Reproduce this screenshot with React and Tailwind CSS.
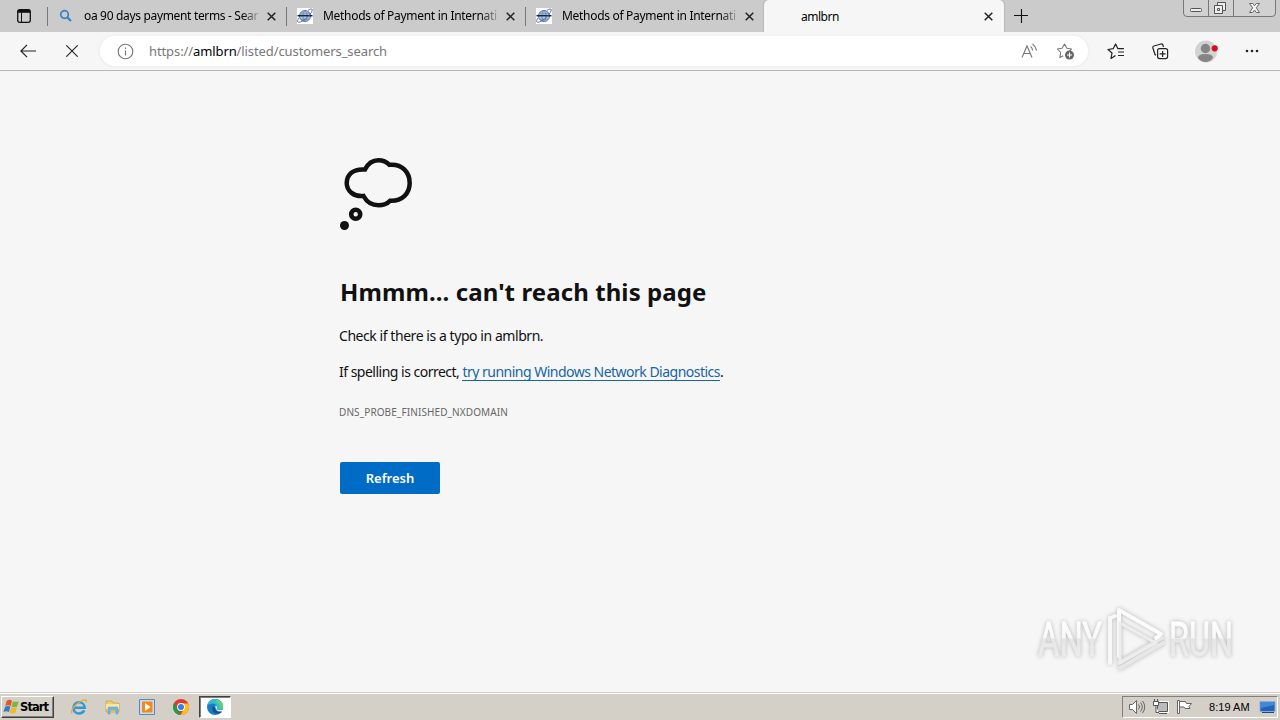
import React from 'react';
import clsx from 'clsx';

const tabs = [
  { id: 1, title: 'oa 90 days payment terms - Sear', icon: 'search' },
  { id: 2, title: 'Methods of Payment in Internati', icon: 'globe' },
  { id: 3, title: 'Methods of Payment in Internati', icon: 'globe' },
];

const CloseIcon = () => (
  <svg className="block shrink-0" width="9" height="9" viewBox="0 0 9 9" stroke="#222" strokeWidth="1.5" fill="none">
    <path d="M.7.7l7.6 7.6M8.3.7L.7 8.3" />
  </svg>
);

const SearchIcon = () => (
  <svg className="shrink-0" width="16" height="16" viewBox="0 0 16 16" fill="none" stroke="#3a82c8">
    <circle cx="6.500" cy="6.500" r="3.800" strokeWidth="1.700" />
    <path d="M9.200 9.300l3.700 3.700" strokeWidth="2.200" />
  </svg>
);

const GlobeIcon = () => (
  <svg className="shrink-0" width="16" height="16" viewBox="0 0 16 16" fill="none">
    <path fill="#fff" d="M0 0h16v16H0z" />
    <circle cx="8" cy="8" r="5.500" fill="#b4c7e3" stroke="#5574aa" />
    <path d="M3.500 5.200h9M3.800 11.200h8.400M8 2.400c-2.800 3-2.800 8 0 11M8 2.400c2.800 3 2.800 8 0 11" stroke="#5574aa" strokeWidth=".6" />
    <path d="M.5 7.700h15" stroke="#14233f" strokeWidth="1.500" />
    <path d="M2 10C-1 14 1 15.500 5 13.200 10 10.500 15 5 15.300 1.800 15 .4 13 1 11 2.300" stroke="#4a639a" strokeWidth=".9" />
  </svg>
);

const Tab = ({ title, icon }) => (
  <div className="flex h-8 w-[239px] items-center pr-[10px] pl-[11px]">
    {icon === 'search' ? <SearchIcon /> : <GlobeIcon />}
    <span
      className={clsx(
        'ml-[10px] w-[175px] shrink-0 whitespace-nowrap [mask-image:linear-gradient(to_right,#000_158px,transparent_178px)]',
        icon === 'search' ? 'tracking-[-0.33px]' : 'tracking-[-0.3px]',
      )}
    >
      {title}
    </span>
    <span className="ml-[8px]"><CloseIcon /></span>
  </div>
);

const WindowButtons = () => (
  <svg className="block" width="94" height="18" viewBox="0 0 94 18" fill="none">
    <path d="M.5 0v13q0 3.500 3.500 3.500h85q3.500 0 3.500-3.500V0" fill="#d1d1d1" stroke="#777" />
    <path d="M25.500 0v16M50.500 0v16" stroke="#777" />
    <rect x="7.500" y="8.500" width="11" height="3" rx="1" fill="#eee" stroke="#555" />
    <g fill="#eee" stroke="#555">
      <path d="M34.500 2.500h8v8h-8z" />
      <path d="M31.500 5.500h8v8h-8z" />
      <path d="M34.500 8.500h2v2h-2z" />
    </g>
    <path d="M66.500 3.500h3.200l1.800 2.200 1.800-2.200h3.200l-3.200 4.300 3.200 4.700h-3.200l-1.800-2.500-1.800 2.500h-3.200l3.200-4.700z" fill="#f3f3f3" stroke="#666" />
  </svg>
);

const TabStrip = () => (
  <div className="relative flex h-8 bg-[#cbcbcb] text-xs text-black">
    <div className="flex w-[47px] items-center pl-[17px]">
      <svg width="14" height="14" viewBox="0 0 14 14" fill="none" stroke="#111">
        <rect x=".7" y=".7" width="12.600" height="12.600" rx="2" strokeWidth="1.300" />
        <path d="M1 2.300h12" strokeWidth="3" />
        <path d="M4.500 3v10" />
      </svg>
    </div>
    {tabs.map((tab) => (
      <div key={tab.id} className="flex items-center">
        <i className="-mr-px h-[19px] w-px bg-[#777]" />
        <Tab title={tab.title} icon={tab.icon} />
      </div>
    ))}
    <div className="flex h-8 w-[240px] items-center justify-between rounded-t-[5px] bg-[#f6f6f6] pr-[11px] pl-[37px] shadow-[0_0_1px_1px_#b8b8b8]">
      <span className="pt-px tracking-[-0.5px]">amlbrn</span>
      <CloseIcon />
    </div>
    <svg className="mt-[9px] ml-[10px]" width="14" height="14" viewBox="0 0 14 14" stroke="#111">
      <path d="M0 6.500h14M7.500 0v14" strokeWidth="1.100" />
    </svg>
    <div className="ml-auto w-[97px]">
      <WindowButtons />
    </div>
  </div>
);

const Toolbar = () => (
  <div className="relative flex h-[39px] items-center border-b border-[#b7b7b7] bg-[#f6f6f6]">
    <svg className="ml-[20px]" width="17" height="14" viewBox="0 0 17 14" fill="none" stroke="#222" strokeWidth="1.200">
      <path d="M16 7H1M7 .8L.9 7 7 13.200" />
    </svg>
    <svg className="ml-[29px]" width="12" height="12" viewBox="0 0 12 12" stroke="#222" strokeWidth="1.100">
      <path d="M.3.3l11.400 11.400M11.700.3L.3 11.700" />
    </svg>
    <div className="ml-[22px] flex h-[30px] w-[988px] items-center rounded-full bg-white pr-[13px] pl-[17px] shadow-[0_0_0_2px_#f1f1f1]">
      <svg width="17" height="17" viewBox="0 0 17 17" fill="none" stroke="#777">
        <circle cx="8.500" cy="8.500" r="7.300" strokeWidth="1.100" />
        <path d="M8.500 7.500v5M8.500 4.500V6" strokeWidth="1.200" />
      </svg>
      <span className="mt-px ml-[15px] text-[13px] tracking-[-0.1px] text-[#777]">
        https://<span className="text-black">amlbrn</span>/listed/customers_search
      </span>
      <svg className="ml-auto" width="17" height="16" viewBox="0 0 17 16" fill="none" stroke="#777" strokeWidth="1.100">
        <path d="M2 14.500L7 3l5 11.500M3.800 10.500h6.500" />
        <path d="M10.500 3.500q2 1.500 2.200 4M12.500 1q3.500 2.500 4 6.500" />
      </svg>
      <svg className="ml-[19px]" width="19" height="18" viewBox="0 0 19 18" fill="none" stroke="#777" strokeWidth="1.100">
        <path d="M6.500 13.200l-3.400 1.900.9-5.100L.8 6.500l4.600-.7L7.800 1.500l2.300 4.300 4.700.7-2 1.800" transform="translate(.7 .5)" strokeLinejoin="round" />
        <circle cx="13.500" cy="13" r="4.500" fill="#666" stroke="none" />
        <path d="M11 13h5M13.500 10.500v5" stroke="#fff" />
      </svg>
    </div>
    <svg className="ml-[19px]" width="18" height="17" viewBox="0 0 18 17" fill="none" stroke="#222" strokeWidth="1.200">
      <path d="M8.500 12.500l-4.500 3 1-5.500L1 6.500l5.200-.8L8.600 1l2.300 4.700h6M11 9h6M11 12.500h6" strokeLinejoin="round" />
    </svg>
    <svg className="ml-[27px]" width="17" height="17" viewBox="0 0 17 17" fill="none" stroke="#222" strokeWidth="1.200">
      <path d="M4 12.200l-1-.7L.9 5q-.4-1.500 1-2L9 1q1.300-.3 1.800.8l.7 2.200" />
      <rect x="5.600" y="5.600" width="10" height="10" rx="2" fill="#f6f6f6" />
      <path d="M10.600 8v6M7.600 10.800h6" />
    </svg>
    <svg className="ml-[26px]" width="23" height="23" viewBox="0 0 23 23">
      <circle cx="11" cy="11.500" r="11" fill="#d2d2d2" />
      <circle cx="10.500" cy="8.500" r="4.700" fill="#858585" />
      <path d="M3 18q0-4 7.500-4t7.500 4q-3 4-7.500 4T3 18z" fill="#858585" />
      <circle cx="19.700" cy="8.300" r="3.100" fill="#d70c22" />
    </svg>
    <svg className="ml-[27px]" width="14" height="4" viewBox="0 0 14 4" fill="#222">
      <circle cx="2" cy="2" r="1.300" />
      <circle cx="7" cy="2" r="1.300" />
      <circle cx="12" cy="2" r="1.300" />
    </svg>
  </div>
);

const ThoughtBubble = () => (
  <svg className="block" width="74" height="74" viewBox="0 0 74 74" fill="none" stroke="#111" strokeWidth="4.500">
    <path d="M25 11.500C28 5.500 33 2.300 38.500 2.300c5 0 8.500 2 11 4.500C62 5.500 69.700 14.500 69.700 25S62 43.500 50 42.800c-3 3-7 4.500-11.500 4.500C32 47.300 26.500 43.500 23.500 38 14 39 6.700 33 6.700 25 6.700 16.500 13 10.500 25 11.500z" />
    <circle cx="15.700" cy="56.200" r="4.500" strokeWidth="4.600" />
    <circle cx="4.500" cy="67.500" r="4.500" fill="#111" stroke="none" />
  </svg>
);

const Watermark = () => (
  <svg className="absolute right-[35px] bottom-[12px] overflow-visible" width="216" height="80" viewBox="0 0 216 80">
    <defs>
      <linearGradient id="letters" gradientUnits="userSpaceOnUse" x1="0" y1="18" x2="0" y2="56">
        <stop offset="0" stopColor="#fff" />
        <stop offset=".52" stopColor="#f8f8f8" />
        <stop offset=".56" stopColor="#e6e6e6" />
        <stop offset="1" stopColor="#ececec" />
      </linearGradient>
    </defs>
    <g className="[filter:drop-shadow(0_0_2px_#b4b4b4)]">
      <g fill="url(#letters)" stroke="url(#letters)" strokeWidth=".8" fontFamily="Roboto, sans-serif" fontSize="48">
        <text x="9" y="56" textLength="64" lengthAdjust="spacingAndGlyphs">ANY</text>
        <text x="140" y="56" textLength="64" lengthAdjust="spacingAndGlyphs">RUN</text>
      </g>
      <g fill="none" strokeLinejoin="round" strokeLinecap="round">
        <path d="M90 63l43-25M91 68l43-25" stroke="#e7e7e7" strokeWidth="4" />
        <path d="M90 56V10l42 24-5 4" stroke="#fbfbfb" strokeWidth="4" />
        <path d="M81 63V18l5-2" stroke="#f8f8f8" strokeWidth="4" />
        <path d="M91 23l36 20-36 20z" stroke="#ededed" strokeWidth="3" />
      </g>
    </g>
  </svg>
);

const ErrorPage = () => (
  <main className="relative h-[621px] bg-[#f6f6f6] pt-[87px] pl-[340px] text-[#111]">
    <ThoughtBubble />
    <h1 className="mt-[42px] text-2xl leading-9 font-bold tracking-[0.09px]">Hmmm... can't reach this page</h1>
    <p className="mt-4 -ml-px text-sm leading-5 tracking-[-0.44px]">Check if there is a typo in amlbrn.</p>
    <p className="mt-4 -ml-px text-sm leading-5 tracking-[-0.51px]">
      If spelling is correct, <a className="inline-block h-[19px] border-b border-[#1765a2] text-[#1765a2]">try running Windows Network Diagnostics</a>.
    </p>
    <p className="mt-[22px] -ml-px text-[10px] leading-4 tracking-[0.1px] text-[#666]">DNS_PROBE_FINISHED_NXDOMAIN</p>
    <button className="mt-[42px] block h-8 w-[100px] rounded-[2px] bg-[#006cc5] pt-px text-[13px] font-semibold text-white">Refresh</button>
    <Watermark />
  </main>
);

const ExplorerIcon = () => (
  <svg width="16" height="16" viewBox="0 0 16 16" fill="none">
    <path d="M13.300 11.500q-2 3-5.300 3A5.600 5.600 0 1 1 13.700 8.700H4" stroke="#3398d8" strokeWidth="2.600" />
    <path d="M1.200 14.500C-1 12 4 4 13 1q3-.7 2 2.500" stroke="#d9ad31" strokeWidth="1.200" />
  </svg>
);

const FolderIcon = () => (
  <svg width="16" height="16" viewBox="0 0 16 16">
    <path d="M1 2h6l1 2h6v9H1z" fill="#edcf6c" stroke="#bd963b" strokeWidth=".6" />
    <path d="M1 5h13v5H1z" fill="#fae79f" />
    <path d="M3 15V9q0-1 1-1h8q1 0 1 1v6h-2v-4H5v4z" fill="#75b7df" stroke="#5998be" strokeWidth=".5" />
  </svg>
);

const MediaIcon = () => (
  <svg width="16" height="16" viewBox="0 0 16 16">
    <path d="M.5.5h15v15H.5z" fill="#c7ddf4" stroke="#5689bf" />
    <path d="M3 2.500h10.500v11H3z" fill="#f48a16" />
    <path d="M6 4l5.500 4L6 12z" fill="#fff" />
  </svg>
);

const ChromeIcon = () => (
  <svg width="16" height="16" viewBox="0 0 16 16">
    <circle cx="8" cy="8" r="8" fill="#e4392e" />
    <path d="M1.100 4L5 10.500 8 16A8 8 0 0 1 1.100 4z" fill="#229b4b" />
    <path d="M8 4.500h7.200A8 8 0 0 1 7.500 16L11 10z" fill="#fbc116" />
    <circle cx="8" cy="8" r="3.900" fill="#fff" />
    <circle cx="8" cy="8" r="3" fill="#347fe3" />
  </svg>
);

const EdgeIcon = () => (
  <svg width="16" height="16" viewBox="0 0 16 16">
    <circle cx="8" cy="8" r="8" fill="#167cc3" />
    <path d="M.3 7A8 8 0 0 1 8 0c5 0 8 3.500 8 7 0 3-2.500 4-5 4-1.500 0-2-.7-1.500-1.500C11 7 8.500 4.500 5.500 4.500 3 4.500 1 5.500.3 7z" fill="#35bfc4" />
    <path d="M10 1q6 1.500 6 6 0 3-3 3.800Q14 5 9 3z" fill="#62cf7b" />
    <path d="M6 7c-2 4 1 8 6 7.500 1.500-.2 2.500-1 3-2-2 .8-7 .5-7-3.500z" fill="#164e8c" />
    <path d="M8.500 6.500Q11 8 9.500 9.500q0 1.500 2 1.500h4l-.5 1c-4 1-7-1-6.500-5.500z" fill="#fff" />
  </svg>
);

const StartButton = () => (
  <div className="flex h-[22px] w-[53px] items-center border border-t-white border-r-[#404040] border-b-[#404040] border-l-white bg-[#d4d0c8] shadow-[inset_-1px_-1px_0_#808080]">
    <svg className="ml-px shrink-0" width="17" height="16" viewBox="0 0 16 15">
      <path d="M3.500 1.500q2.500-1.500 5 0L7.200 6.500q-2.500-1.300-5 0z" fill="#e85522" />
      <path d="M9.300 2q2.700 1.300 5.500 0l-1.500 5q-2.700 1.400-5.200 0z" fill="#79b83b" />
      <path d="M2 7.300q2.500-1.400 5 0l-1.400 5q-2.500-1.400-5.200 0z" fill="#347bc6" />
      <path d="M7.900 7.800q2.500 1.400 5.200 0L11.600 13q-2.600 1.200-5.200 0z" fill="#f1b820" />
    </svg>
    <span className="pt-[2px] font-['DejaVu_Sans',sans-serif] text-[11.5px] font-bold tracking-[-0.9px]">Start</span>
  </div>
);

const Tray = () => (
  <div className="ml-auto flex h-[22px] w-[156px] items-center border border-t-[#808080] border-r-white border-b-white border-l-[#808080] pl-[6px]">
    <svg width="17" height="16" viewBox="0 0 17 16" fill="none" stroke="#666">
      <path d="M.5 5.500h3l4-4v13l-4-4h-3z" fill="#fff" />
      <path d="M9.500 5.500q2 2.500 0 5M11.500 3.500q3.500 4.500 0 9M13.500 2q4.500 6 0 12" />
    </svg>
    <svg className="ml-[7px]" width="17" height="16" viewBox="0 0 17 16" fill="none" stroke="#555">
      <path d="M4.500 3.500h10v9h-10z" fill="#bbb" stroke="#fff" strokeWidth="3" />
      <path d="M4.500 3.500h10v9h-10zM6 14.500h8" fill="#bbb" />
      <path d="M.5 2.500h5v4h-5zM1.500 0v2M4.500 0v2M3 7v6.500h3" fill="#fff" />
    </svg>
    <svg className="ml-[7px]" width="17" height="16" viewBox="0 0 17 16" fill="#fff" stroke="#666">
      <path d="M.5 1.500h2v13h-2z" />
      <path d="M2.500 2.500h6l1 2h5l-2.500 3 1 2h-5l-1-1.500H2.500z" />
    </svg>
    <span className="ml-[15px] pt-px font-['Liberation_Sans',sans-serif] text-[11px] tracking-[0.03px] whitespace-nowrap">8:19 AM</span>
    <svg className="mr-px ml-auto" width="17" height="14" viewBox="0 0 17 14">
      <path d="M1 1.500h15v10H1z" fill="#2462b6" stroke="#83afe3" />
      <path d="M2 2h13v3L2 8z" fill="#4387d7" />
      <path d="M3 12.500h12" stroke="#234477" />
    </svg>
  </div>
);

const Taskbar = () => (
  <footer className="flex h-7 items-center border-t border-[#d4d0c8] bg-[#d4d0c8] pr-[2px] pl-px text-black shadow-[inset_0_1px_0_#fff]">
    <StartButton />
    <div className="ml-[17px] flex items-center gap-[18px]">
      <ExplorerIcon />
      <FolderIcon />
      <MediaIcon />
      <ChromeIcon />
    </div>
    <div className="ml-[10px] flex h-[22px] w-[32px] items-center justify-center border border-t-[#404040] border-r-white border-b-white border-l-[#404040] bg-white shadow-[inset_1px_1px_0_#808080]">
      <EdgeIcon />
    </div>
    <Tray />
  </footer>
);

export default function App() {
  return (
    <div className="h-[720px] w-[1280px] overflow-hidden bg-[#f6f6f6] font-['Noto_Sans','Open_Sans',sans-serif]">
      <TabStrip />
      <Toolbar />
      <ErrorPage />
      <Taskbar />
    </div>
  );
}
